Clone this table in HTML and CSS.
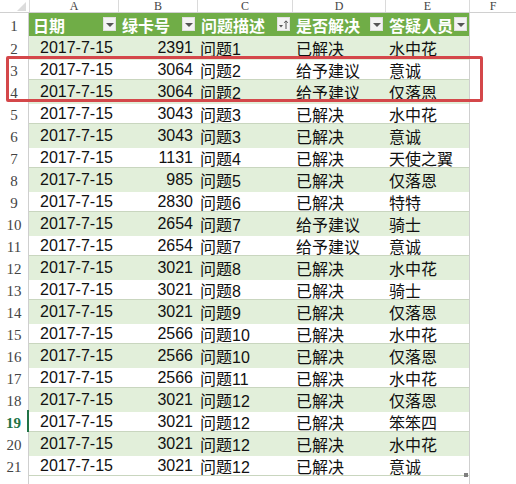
FILE: index.html
```html
<!DOCTYPE html>
<html lang="zh">
<head>
<meta charset="utf-8">
<link rel="stylesheet" href="styles.css">
</head>
<body>
<div class="sheet">
  <div class="row colhead">
    <div class="corner"><span class="tri"></span></div>
    <div class="letter">A</div><div class="letter">B</div><div class="letter">C</div><div class="letter">D</div><div class="letter">E</div><div class="letter">F</div>
  </div>
  <div class="row thead">
    <div class="num">1</div>
    <div class="hc">日期<span class="btn"><i></i></span></div>
    <div class="hc">绿卡号<span class="btn"><i></i></span></div>
    <div class="hc">问题描述<span class="btn sort"><svg width="11" height="11" viewBox="0 0 11 11"><path d="M1 6h4l-2 2.5z" fill="#555"/><path d="M8 10V2M6.2 3.8L8 1.8l1.8 2" stroke="#555" stroke-width="1" fill="none"/></svg></span></div>
    <div class="hc">是否解决<span class="btn"><i></i></span></div>
    <div class="hc">答疑人员<span class="btn"><i></i></span></div>
    <div class="fcell"></div>
  </div>
  <div class="row band"><div class="num">2</div><div class="c date">2017-7-15</div><div class="c n">2391</div><div class="c t">问题1</div><div class="c t">已解决</div><div class="c t">水中花</div><div class="fcell"></div></div>
  <div class="row"><div class="num">3</div><div class="c date">2017-7-15</div><div class="c n">3064</div><div class="c t">问题2</div><div class="c t">给予建议</div><div class="c t">意诚</div><div class="fcell"></div></div>
  <div class="row band"><div class="num">4</div><div class="c date">2017-7-15</div><div class="c n">3064</div><div class="c t">问题2</div><div class="c t">给予建议</div><div class="c t">仅落恩</div><div class="fcell"></div></div>
  <div class="row"><div class="num">5</div><div class="c date">2017-7-15</div><div class="c n">3043</div><div class="c t">问题3</div><div class="c t">已解决</div><div class="c t">水中花</div><div class="fcell"></div></div>
  <div class="row band"><div class="num">6</div><div class="c date">2017-7-15</div><div class="c n">3043</div><div class="c t">问题3</div><div class="c t">已解决</div><div class="c t">意诚</div><div class="fcell"></div></div>
  <div class="row"><div class="num">7</div><div class="c date">2017-7-15</div><div class="c n">1131</div><div class="c t">问题4</div><div class="c t">已解决</div><div class="c t">天使之翼</div><div class="fcell"></div></div>
  <div class="row band"><div class="num">8</div><div class="c date">2017-7-15</div><div class="c n">985</div><div class="c t">问题5</div><div class="c t">已解决</div><div class="c t">仅落恩</div><div class="fcell"></div></div>
  <div class="row"><div class="num">9</div><div class="c date">2017-7-15</div><div class="c n">2830</div><div class="c t">问题6</div><div class="c t">已解决</div><div class="c t">特特</div><div class="fcell"></div></div>
  <div class="row band"><div class="num">10</div><div class="c date">2017-7-15</div><div class="c n">2654</div><div class="c t">问题7</div><div class="c t">给予建议</div><div class="c t">骑士</div><div class="fcell"></div></div>
  <div class="row"><div class="num">11</div><div class="c date">2017-7-15</div><div class="c n">2654</div><div class="c t">问题7</div><div class="c t">给予建议</div><div class="c t">意诚</div><div class="fcell"></div></div>
  <div class="row band"><div class="num">12</div><div class="c date">2017-7-15</div><div class="c n">3021</div><div class="c t">问题8</div><div class="c t">已解决</div><div class="c t">水中花</div><div class="fcell"></div></div>
  <div class="row"><div class="num">13</div><div class="c date">2017-7-15</div><div class="c n">3021</div><div class="c t">问题8</div><div class="c t">已解决</div><div class="c t">骑士</div><div class="fcell"></div></div>
  <div class="row band"><div class="num">14</div><div class="c date">2017-7-15</div><div class="c n">3021</div><div class="c t">问题9</div><div class="c t">已解决</div><div class="c t">仅落恩</div><div class="fcell"></div></div>
  <div class="row"><div class="num">15</div><div class="c date">2017-7-15</div><div class="c n">2566</div><div class="c t">问题10</div><div class="c t">已解决</div><div class="c t">水中花</div><div class="fcell"></div></div>
  <div class="row band"><div class="num">16</div><div class="c date">2017-7-15</div><div class="c n">2566</div><div class="c t">问题10</div><div class="c t">已解决</div><div class="c t">仅落恩</div><div class="fcell"></div></div>
  <div class="row"><div class="num">17</div><div class="c date">2017-7-15</div><div class="c n">2566</div><div class="c t">问题11</div><div class="c t">已解决</div><div class="c t">水中花</div><div class="fcell"></div></div>
  <div class="row band"><div class="num">18</div><div class="c date">2017-7-15</div><div class="c n">3021</div><div class="c t">问题12</div><div class="c t">已解决</div><div class="c t">仅落恩</div><div class="fcell"></div></div>
  <div class="row"><div class="num active">19</div><div class="c date">2017-7-15</div><div class="c n">3021</div><div class="c t">问题12</div><div class="c t">已解决</div><div class="c t">笨笨四</div><div class="fcell"></div></div>
  <div class="row band"><div class="num">20</div><div class="c date">2017-7-15</div><div class="c n">3021</div><div class="c t">问题12</div><div class="c t">已解决</div><div class="c t">水中花</div><div class="fcell"></div></div>
  <div class="row last"><div class="num">21</div><div class="c date">2017-7-15</div><div class="c n">3021</div><div class="c t">问题12</div><div class="c t">已解决</div><div class="c t">意诚<span class="grip"></span></div><div class="fcell"></div></div>
  <div class="row tail"><div class="num"></div><div></div><div></div><div></div><div></div><div></div><div class="fcell"></div></div>
  <div class="highlight"></div>
</div>
</body>
</html>
```

FILE: styles.css
```css
html, body {
  margin: 0;
  padding: 0;
  background: #ffffff;
  overflow: hidden;
}
.sheet {
  position: relative;
  width: 516px;
  height: 484px;
  overflow: hidden;
  font-family: "Liberation Sans", "Noto Sans CJK SC", sans-serif;
  font-size: 16px;
  color: #111;
}
.row {
  display: grid;
  grid-template-columns: 29px 89px 79px 95px 93px 84px 1fr;
  height: 22px;
  box-sizing: border-box;
  border-bottom: 1px solid #c9d6bf;
}
.row > div {
  display: flex;
  align-items: center;
  white-space: nowrap;
  position: relative;
}
.colhead {
  height: 13px;
  border-bottom: 1px solid #d0d0d0;
}
.colhead .letter {
  justify-content: center;
  font-family: "Liberation Serif", serif;
  font-size: 12px;
  color: #444;
  border-left: 1px solid #dadada;
  line-height: 12px;
}
.corner {
  position: relative;
}
.tri {
  position: absolute;
  right: 3px;
  bottom: 1px;
  width: 0;
  height: 0;
  border-left: 9px solid transparent;
  border-bottom: 9px solid #dcdcdc;
}
.num {
  justify-content: center;
  font-family: "Liberation Serif", serif;
  font-size: 15px;
  color: #444;
  background: #fff;
  border-right: 1px solid #cfcfcf;
  padding-top: 3px;
  box-sizing: border-box;
}
.num.active {
  color: #217346;
  font-weight: bold;
  border-right: 2px solid #217346;
}
.thead {
  height: 23px;
  border-bottom: none;
}
.thead .hc {
  background: #70ad47;
  color: #fff;
  font-weight: bold;
  padding-left: 4px;
  font-family: "Noto Sans CJK SC", sans-serif;
  font-size: 16px;
}
.btn {
  position: absolute;
  right: 2px;
  top: 4px;
  width: 13px;
  height: 14px;
  background: #f3f3f3;
  border: 1px solid #e0e0e0;
  box-sizing: border-box;
  display: flex;
  align-items: center;
  justify-content: center;
}
.btn i {
  display: block;
  width: 0;
  height: 0;
  border-left: 4px solid transparent;
  border-right: 4px solid transparent;
  border-top: 4px solid #555;
  margin-top: 1px;
}
.fcell {
  border-left: 1px solid #cfcfcf;
  background: #fff;
}
.band .c {
  background: #e2efda;
}
.date {
  padding-left: 11px;
}
.n {
  justify-content: flex-end;
  padding-right: 4px;
}
.t {
  padding-left: 3px;
}
.row .t:nth-child(5), .row .t:nth-child(6) {
  padding-left: 4px;
}
.row.last {
  border-bottom: 1px solid #c9d6bf;
}
.grip {
  position: absolute;
  right: 1px;
  bottom: 1px;
  width: 4px;
  height: 4px;
  background: #7f7f7f;
}
.tail {
  border-bottom: none;
}
.tail .num {
  border-right: 1px solid #cfcfcf;
}
.highlight {
  position: absolute;
  left: 6px;
  top: 56px;
  width: 477px;
  height: 46px;
  border: 3px solid #d4474a;
  border-radius: 2px;
  box-sizing: border-box;
}
```
